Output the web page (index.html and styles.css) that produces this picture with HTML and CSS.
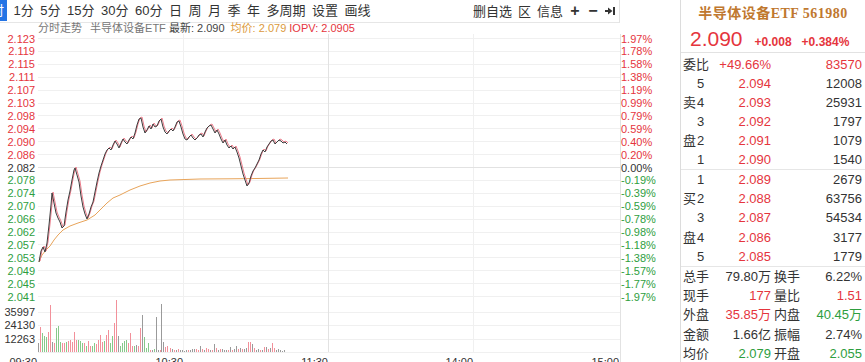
FILE: index.html
```html
<!DOCTYPE html>
<html lang="zh-CN">
  <head>
    <meta charset="UTF-8" />
    <meta name="viewport" content="width=device-width, initial-scale=1.0" />
    <title>半导体设备ETF 561980</title>
    <link rel="stylesheet" href="styles.css">
  </head>
  <body>
    <div class="app">
      <div class="main">
        <div class="toolbar">
          <div class="tabs">
            <span class="tab active">分时</span>
            <span class="tab">1分</span>
            <span class="tab">5分</span>
            <span class="tab">15分</span>
            <span class="tab">30分</span>
            <span class="tab">60分</span>
            <span class="tab">日</span>
            <span class="tab">周</span>
            <span class="tab">月</span>
            <span class="tab">季</span>
            <span class="tab">年</span>
            <span class="tab">多周期</span>
            <span class="tab">设置</span>
            <span class="tab">画线</span>
          </div>
          <div class="actions">
            <span>删自选</span>
            <span>区</span>
            <span>信息</span>
            <span class="sign">+</span>
            <span class="sign">−</span>
            <svg class="collapse" width="10" height="10" viewBox="0 0 10 10">
              <rect x="8" y="1" width="2" height="8" fill="#333" />
              <rect x="0" y="4" width="3" height="2" fill="#333" />
              <path d="M3 1.5L7.5 5L3 8.5Z" fill="#333" />
            </svg>
          </div>
        </div>
        <div class="info">
          <span class="muted">分时走势</span>
          <span class="muted gap">半导体设备ETF</span>
          <span>最新: 2.090</span>
          <span class="avg">均价: 2.079</span>
          <span class="iopv">IOPV: 2.0905</span>
        </div>
        <svg class="chart" width="680" height="328" viewBox="0 34 680 328">
          <!-- grid -->
          <g stroke="#f0f0f0" stroke-width="1" shape-rendering="crispEdges">
            <path d="M38 38.5H620M38 51.4H620M38 64.3H620M38 77.2H620M38 90.1H620M38 103H620M38 115.9H620M38 128.8H620M38 141.7H620M38 154.6H620M38 180.4H620M38 193.3H620M38 206.2H620M38 219.1H620M38 232H620M38 244.9H620M38 257.8H620M38 270.7H620M38 283.6H620M38 296.5H620" />
            <path d="M38 312H620M38 325.5H620M38 339H620M38 352H620" />
            <path d="M183 34V352M473 34V352" />
          </g>
          <g stroke="#e2e2e2" shape-rendering="crispEdges">
            <path d="M38 167.5H620" />
            <path d="M328 34V352" />
            <path d="M620 34V362" />
          </g>

          <!-- left price axis -->
          <g class="axis" text-anchor="end">
            <text x="35" y="42.5" class="up">2.123</text>
            <text x="35" y="55.4" class="up">2.119</text>
            <text x="35" y="68.3" class="up">2.115</text>
            <text x="35" y="81.2" class="up">2.111</text>
            <text x="35" y="94.1" class="up">2.107</text>
            <text x="35" y="107" class="up">2.103</text>
            <text x="35" y="119.9" class="up">2.098</text>
            <text x="35" y="132.8" class="up">2.094</text>
            <text x="35" y="145.7" class="up">2.090</text>
            <text x="35" y="158.6" class="up">2.086</text>
            <text x="35" y="171.5">2.082</text>
            <text x="35" y="184.4" class="down">2.078</text>
            <text x="35" y="197.3" class="down">2.074</text>
            <text x="35" y="210.2" class="down">2.070</text>
            <text x="35" y="223.1" class="down">2.066</text>
            <text x="35" y="236" class="down">2.062</text>
            <text x="35" y="248.9" class="down">2.057</text>
            <text x="35" y="261.8" class="down">2.053</text>
            <text x="35" y="274.7" class="down">2.049</text>
            <text x="35" y="287.6" class="down">2.045</text>
            <text x="35" y="300.5" class="down">2.041</text>
            <text x="35" y="315.5">35997</text>
            <text x="35" y="329">24130</text>
            <text x="35" y="342.5">12263</text>
          </g>

          <!-- right percent axis -->
          <g class="axis">
            <text x="621" y="42.5" class="up">1.97%</text>
            <text x="621" y="55.4" class="up">1.78%</text>
            <text x="621" y="68.3" class="up">1.58%</text>
            <text x="621" y="81.2" class="up">1.38%</text>
            <text x="621" y="94.1" class="up">1.19%</text>
            <text x="621" y="107" class="up">0.99%</text>
            <text x="621" y="119.9" class="up">0.79%</text>
            <text x="621" y="132.8" class="up">0.59%</text>
            <text x="621" y="145.7" class="up">0.40%</text>
            <text x="621" y="158.6" class="up">0.20%</text>
            <text x="621" y="171.5">0.00%</text>
            <text x="621" y="184.4" class="down">-0.19%</text>
            <text x="621" y="197.3" class="down">-0.39%</text>
            <text x="621" y="210.2" class="down">-0.59%</text>
            <text x="621" y="223.1" class="down">-0.78%</text>
            <text x="621" y="236" class="down">-0.98%</text>
            <text x="621" y="248.9" class="down">-1.18%</text>
            <text x="621" y="261.8" class="down">-1.38%</text>
            <text x="621" y="274.7" class="down">-1.57%</text>
            <text x="621" y="287.6" class="down">-1.77%</text>
            <text x="621" y="300.5" class="down">-1.97%</text>
          </g>

          <!-- time axis -->
          <g class="axis" text-anchor="end">
            <text x="37" y="366">09:30</text>
            <text x="183" y="366">10:30</text>
            <text x="328" y="366">11:30</text>
            <text x="473" y="366">14:00</text>
            <text x="619" y="366">15:00</text>
          </g>

          <!-- volume -->
          <g stroke-width="1" shape-rendering="crispEdges" transform="translate(0.5 0)">
            <path stroke="#f2909a" d="M40 352V327M48 352V332M50 352V305M54 352V343M62 352V343M64 352V343M68 352V341M70 352V340M72 352V342M74 352V332M76 352V340M84 352V343M88 352V341M90 352V346M96 352V344M98 352V340M100 352V335M102 352V342M106 352V335M108 352V330M114 352V323M116 352V300M128 352V343M130 352V333M132 352V346M138 352V346M140 352V328M150 352V350M160 352V350M165 352V347M167 352V346M170 352V348M174 352V350M178 352V349M188 352V350M196 352V349M198 352V350M202 352V349M206 352V348M208 352V349M212 352V350M216 352V348M220 352V349M228 352V350M232 352V350M238 352V349M242 352V349M248 352V342M250 352V342M254 352V348M260 352V350M264 352V347M268 352V349M272 352V343M274 352V348" />
            <path stroke="#86c98a" d="M42 352V333M44 352V336M46 352V337M56 352V328M58 352V326M60 352V342M66 352V342M78 352V340M80 352V341M82 352V343M86 352V346M92 352V346M94 352V343M104 352V341M110 352V343M112 352V336M120 352V346M122 352V343M124 352V341M126 352V340M134 352V346M144 352V337M146 352V348M148 352V343M154 352V349" />
            <path stroke="#9a9a9a" d="M38 352V343M52 352V342M118 352V336M136 352V345M142 352V315M152 352V350M156 352V317M158 352V350M161 352V304M163 352V342M172 352V349M176 352V350M180 352V350M182 352V350M184 352V351M186 352V350M190 352V350M192 352V349M194 352V349M200 352V346M204 352V350M210 352V350M214 352V344M218 352V350M222 352V349M224 352V350M226 352V350M230 352V347M234 352V349M236 352V346M240 352V348M244 352V349M246 352V348M252 352V344M256 352V350M258 352V349M262 352V350M266 352V347M270 352V348M276 352V350M278 352V349M280 352V350M282 352V351M284 352V350" />
          </g>

          <!-- average line -->
          <polyline fill="none" stroke="#e8a45a" stroke-width="1" points="39,262 42,255 46,250 50,246 54,240 58,235 63,230 70,226 78,223 87,220 95,215 100,210 107,203 113,198 120,195 130,190 140,186 150,183 160,181 170,180 185,179.5 200,179 230,178.8 250,178.6 288,178" />

          <!-- price lines -->
          <polyline class="iopv-line" fill="none" stroke="#ec7d8c" stroke-width="1" transform="translate(1 -1)" points="39,262 41,251 43,247 45,252 47,243 49,225 51,205 52,193 54,203 56,213 58,218 60,222 62,228 64,226 66,212 68,200 70,191 72,180 74,170 75,168 77,175 79,182 81,196 83,207 85,214 87,219 89,214 91,207 93,202 95,192 97,182 99,173 101,166 103,160 105,154 107,150 109,148 111,150 113,145 115,141 117,144 119,148 121,143 123,139 125,142 127,144 129,140 131,137 133,139 135,133 137,125 139,119 141,118 143,127 145,133 147,130 149,126 151,129 153,124 155,127 157,126 159,121 161,119 163,127 165,132 167,134 169,131 171,129 173,131 175,127 177,122 179,121 181,127 183,134 185,139 187,140 189,137 191,135 193,138 195,140 197,138 199,135 201,134 203,137 205,132 207,128 209,126 211,125 213,129 215,133 217,130 219,134 221,139 223,143 225,140 227,145 229,148 231,146 233,149 235,147 237,152 239,158 241,166 243,174 245,180 247,186 249,183 251,176 253,171 255,168 257,164 259,160 261,154 263,150 265,152 267,147 269,144 271,141 273,140 275,144 277,142 279,140 281,141 283,143 285,142 287,144" />
          <polyline fill="none" stroke="#3c3c3c" stroke-width="1" points="39,262 41,251 43,247 45,252 47,243 49,225 51,205 52,193 54,203 56,213 58,218 60,222 62,228 64,226 66,212 68,200 70,191 72,180 74,170 75,168 77,175 79,182 81,196 83,207 85,214 87,219 89,214 91,207 93,202 95,192 97,182 99,173 101,166 103,160 105,154 107,150 109,148 111,150 113,145 115,141 117,144 119,148 121,143 123,139 125,142 127,144 129,140 131,137 133,139 135,133 137,125 139,119 141,118 143,127 145,133 147,130 149,126 151,129 153,124 155,127 157,126 159,121 161,119 163,127 165,132 167,134 169,131 171,129 173,131 175,127 177,122 179,121 181,127 183,134 185,139 187,140 189,137 191,135 193,138 195,140 197,138 199,135 201,134 203,137 205,132 207,128 209,126 211,125 213,129 215,133 217,130 219,134 221,139 223,143 225,140 227,145 229,148 231,146 233,149 235,147 237,152 239,158 241,166 243,174 245,180 247,186 249,183 251,176 253,171 255,168 257,164 259,160 261,154 263,150 265,152 267,147 269,144 271,141 273,140 275,144 277,142 279,140 281,141 283,143 285,142 287,144" />
        </svg>
      </div>

      <aside class="quote">
        <div class="title">半导体设备ETF 561980</div>
        <div class="price-row">
          <span class="last">2.090</span>
          <span class="chg">+0.008</span>
          <span class="chg pct">+0.384%</span>
        </div>

        <div class="book sell">
          <div class="row">
            <span class="label">委比</span>
            <span class="num up">+49.66%</span>
            <span class="num up">83570</span>
          </div>
          <div class="row"><span></span><span>5</span><span class="num up">2.094</span><span class="num">12008</span></div>
          <div class="row"><span>卖</span><span>4</span><span class="num up">2.093</span><span class="num">25931</span></div>
          <div class="row"><span></span><span>3</span><span class="num up">2.092</span><span class="num">1797</span></div>
          <div class="row"><span>盘</span><span>2</span><span class="num up">2.091</span><span class="num">1079</span></div>
          <div class="row"><span></span><span>1</span><span class="num up">2.090</span><span class="num">1540</span></div>
        </div>

        <div class="book buy">
          <div class="row"><span></span><span>1</span><span class="num up">2.089</span><span class="num">2679</span></div>
          <div class="row"><span>买</span><span>2</span><span class="num up">2.088</span><span class="num">63756</span></div>
          <div class="row"><span></span><span>3</span><span class="num up">2.087</span><span class="num">54534</span></div>
          <div class="row"><span>盘</span><span>4</span><span class="num up">2.086</span><span class="num">3177</span></div>
          <div class="row"><span></span><span>5</span><span class="num up">2.085</span><span class="num">1779</span></div>
        </div>

        <div class="stats">
          <div class="stat"><span>总手</span><span class="num">79.80万</span><span class="label2">换手</span><span class="num">6.22%</span></div>
          <div class="stat"><span>现手</span><span class="num up">177</span><span class="label2">量比</span><span class="num up">1.51</span></div>
          <div class="stat"><span>外盘</span><span class="num up">35.85万</span><span class="label2">内盘</span><span class="num down">40.45万</span></div>
          <div class="stat"><span>金额</span><span class="num">1.66亿</span><span class="label2">振幅</span><span class="num">2.74%</span></div>
          <div class="stat"><span>均价</span><span class="num down">2.079</span><span class="label2">开盘</span><span class="num down">2.055</span></div>
        </div>
      </aside>
    </div>
  </body>
</html>
```

FILE: styles.css
```css
* {
  padding: 0;
  margin: 0;
  border: 0;
}
*,
*:before,
*:after {
  box-sizing: border-box;
}
html,
body {
  width: 100%;
  height: 100%;
  line-height: 1;
}
body {
  background-color: #fff;
  color: #333;
  font-family: "Liberation Sans", "Noto Sans CJK SC", sans-serif;
  overflow: hidden;
}
/* -------------- */
.app {
  display: flex;
  width: 865px;
  height: 362px;
}

.main {
  width: 680px;
  display: flex;
  flex-direction: column;
}

.toolbar {
  width: 620px;
  height: 23px;
  display: flex;
  align-items: stretch;
  border-bottom: 1px solid #e6e6e6;
  border-right: 1px solid #e2e2e2;
  font-size: 13px;
  overflow: hidden;
  flex-shrink: 0;
}

.tabs {
  display: flex;
  gap: 6.5px;
}

.tab {
  line-height: 21px;
  height: 21px;
  white-space: nowrap;
}

.tab.active {
  background-color: #2474e5;
  color: #fff;
  padding: 0 3px;
  margin-left: -25px;
}

.actions {
  margin-left: auto;
  margin-right: 4px;
  display: flex;
  align-items: center;
  gap: 6px;
  white-space: nowrap;
}

.actions .sign {
  width: 12px;
  text-align: center;
  font-weight: bold;
  font-size: 16px;
}

.info {
  height: 11px;
  padding-left: 38px;
  font-size: 11px;
  line-height: 11px;
  color: #444;
  white-space: nowrap;
  flex-shrink: 0;
}

.info .muted {
  color: #777;
}

.info .gap {
  margin-left: 5px;
}

.info .avg {
  color: #dc9a3c;
  margin-left: 3px;
}

.info .iopv {
  color: #e5353d;
}

.chart {
  display: block;
  flex-shrink: 0;
}

.axis text {
  font-family: "Liberation Sans", sans-serif;
  font-size: 11px;
  fill: #333;
}

.axis .up {
  fill: #e5353d;
}

.axis .down {
  fill: #2e9e3e;
}

/* quote panel */
.quote {
  width: 185px;
  border-left: 1px solid #dcdcdc;
  font-size: 13px;
}

.quote .title {
  height: 27px;
  display: flex;
  align-items: center;
  justify-content: center;
  font-family: "Liberation Serif", "Noto Sans CJK SC", serif;
  font-weight: bold;
  font-size: 14px;
  letter-spacing: 0.5px;
  color: #c0782f;
}

.price-row {
  height: 26px;
  padding: 1px 0 0 9px;
  display: flex;
  align-items: baseline;
  border-bottom: 1px solid #e2e2e2;
  color: #e5353d;
}

.price-row .last {
  font-size: 21px;
  line-height: 21px;
}

.price-row .chg {
  margin-left: 12px;
  font-size: 12px;
  font-weight: bold;
}

.price-row .pct {
  margin-left: 10px;
}

.book {
  padding: 0 3px 0 2px;
}

.book.sell {
  padding-top: 2px;
}

.book.buy {
  border-top: 1px solid #e6e6e6;
}

.book .row {
  display: grid;
  grid-template-columns: 14px 10px 64px 91px;
  height: 19px;
  line-height: 19px;
  white-space: nowrap;
}

.book.buy .row {
  height: 19.2px;
  line-height: 19.2px;
}

.book .label {
  grid-column: span 2;
}

.num {
  text-align: right;
}

.up {
  color: #e5353d;
}

.down {
  color: #2e9e3e;
}

.stats {
  border-top: 1px solid #e6e6e6;
  padding: 0 3px 0 2px;
}

.stat {
  display: grid;
  grid-template-columns: 26px 62px 30px 61px;
  height: 19.2px;
  line-height: 19.2px;
  white-space: nowrap;
}

.stat .label2 {
  padding-left: 3px;
}
```
